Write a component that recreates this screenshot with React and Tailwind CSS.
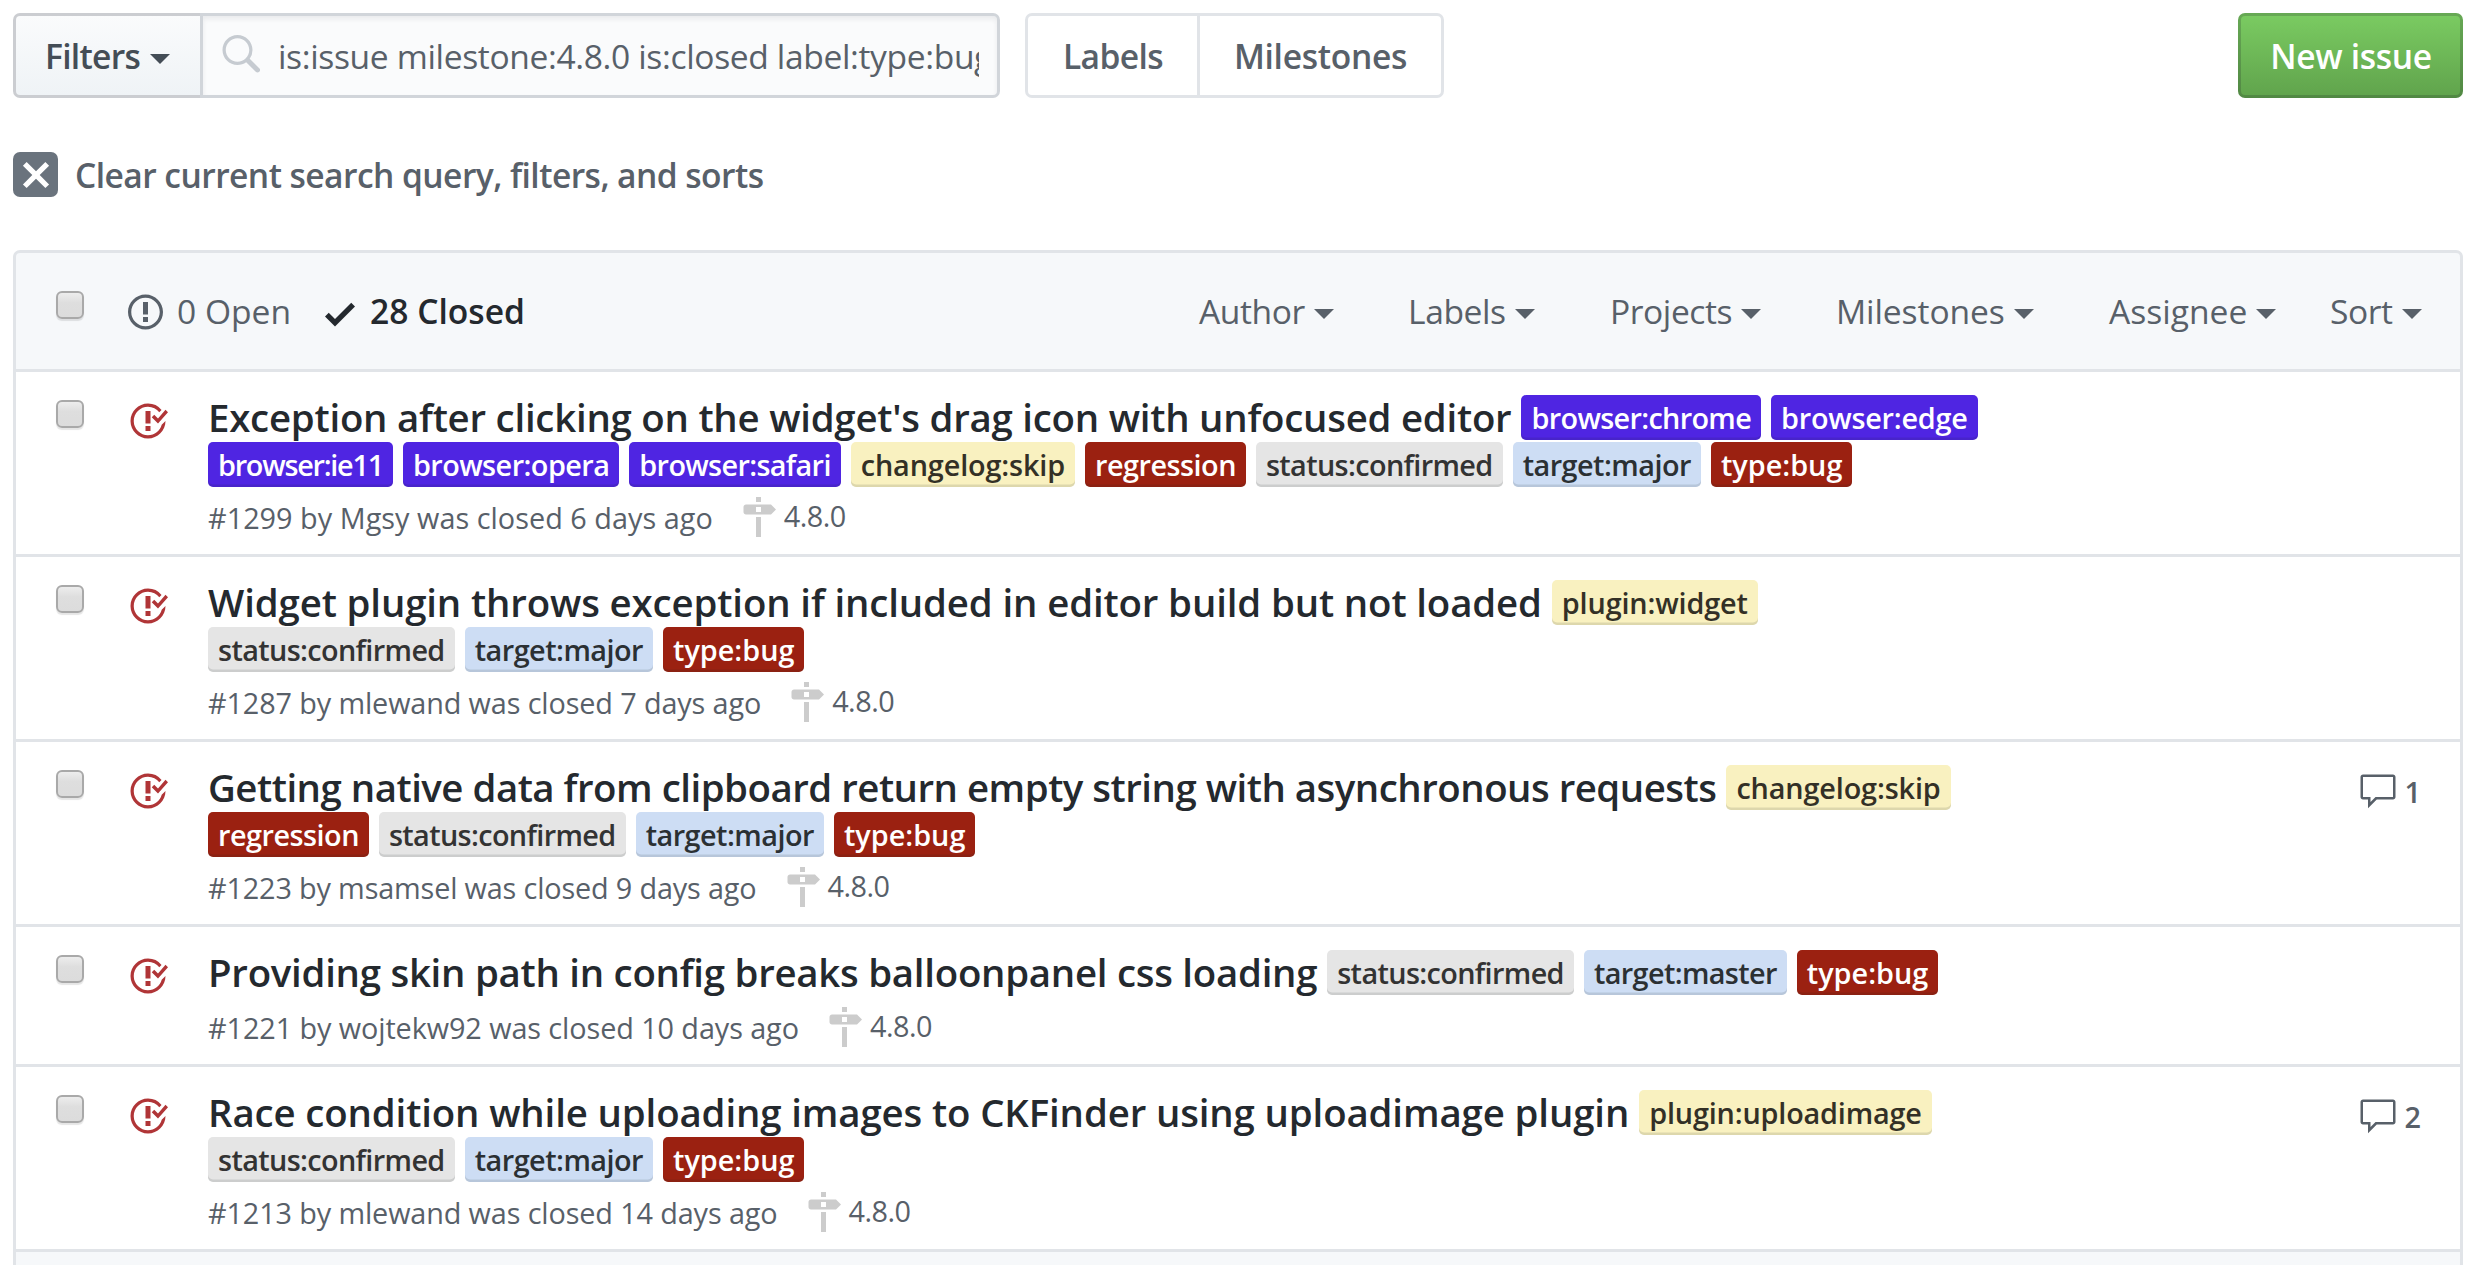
import React from 'react';

const icons = {
  search: {
    w: 16,
    d: 'M15.7 13.3l-3.81-3.83A5.93 5.93 0 0 0 13 6c0-3.31-2.69-6-6-6S1 2.69 1 6s2.69 6 6 6c1.3 0 2.48-.41 3.47-1.11l3.83 3.81c.19.2.45.3.7.3.25 0 .52-.09.7-.3a.996.996 0 0 0 0-1.41v.01zM7 10.7c-2.59 0-4.7-2.11-4.7-4.7 0-2.59 2.11-4.7 4.7-4.7 2.59 0 4.7 2.11 4.7 4.7 0 2.59-2.11 4.7-4.7 4.7z',
  },
  x: {
    w: 12,
    d: 'M7.48 8l3.75 3.75-1.48 1.48L6 9.48l-3.75 3.75-1.48-1.48L4.52 8 .77 4.25l1.48-1.48L6 6.52l3.75-3.75 1.48 1.48L7.48 8z',
  },
  opened: {
    w: 14,
    d: 'M7 2.3c3.14 0 5.7 2.56 5.7 5.7s-2.56 5.7-5.7 5.7A5.71 5.71 0 0 1 1.3 8c0-3.14 2.56-5.7 5.7-5.7zM7 1C3.14 1 0 4.14 0 8s3.14 7 7 7 7-3.14 7-7-3.14-7-7-7zm1 3H6v5h2V4zm0 6H6v2h2v-2z',
  },
  check: { w: 12, d: 'M12 5l-8 8-4-4 1.5-1.5L4 10l6.5-6.5L12 5z' },
  closed: {
    w: 16,
    d: 'M7 10h2v2H7v-2zm2-6H7v5h2V4zm1.5 1.5l-1 1L12 9l4-4.5-1-1L12 7l-1.5-1.5zM8 13.7A5.71 5.71 0 0 1 2.3 8c0-3.14 2.56-5.7 5.7-5.7 1.83 0 3.45.88 4.5 2.2l.92-.92A6.947 6.947 0 0 0 8 1C4.14 1 1 4.14 1 8s3.14 7 7 7 7-3.14 7-7l-1.52 1.52c-.66 2.41-2.86 4.19-5.48 4.19v-.01z',
  },
  milestone: {
    w: 14,
    d: 'M8 2H6V0h2v2zm4 5H2c-.55 0-1-.45-1-1V4c0-.55.45-1 1-1h10l2 2-2 2zM8 4H6v2h2V4zM6 16h2V8H6v8z',
  },
  comment: {
    w: 16,
    d: 'M14 1H2c-.55 0-1 .45-1 1v8c0 .55.45 1 1 1h2v3.5L7.5 11H14c.55 0 1-.45 1-1V2c0-.55-.45-1-1-1zm0 9H7l-2 2v-2H2V2h12v8z',
  },
};

function Icon({ name, className = '' }) {
  const { w, d } = icons[name];
  return (
    <svg
      viewBox={`0 0 ${w} 16`}
      width={w * 2.5}
      height={40}
      fill="currentColor"
      fillRule="evenodd"
      aria-hidden="true"
      className={`shrink-0 ${className}`}
    >
      <path d={d} />
    </svg>
  );
}

function Caret({ className = '' }) {
  return (
    <span
      className={`h-0 w-0 shrink-0 border-x-[10px] border-t-[10px] border-x-transparent border-t-current ${className}`}
    />
  );
}

function Checkbox() {
  return (
    <span className="block h-[28px] w-[28px] shrink-0 rounded-[6px] border-[2.5px] border-[#a9a9a9] bg-linear-to-b from-[#ededed] via-[#dedede] via-40% to-[#dcdcdc] shadow-[0_2px_1px_rgba(0,0,0,0.1)]" />
  );
}

const labelStyles = {
  'browser:chrome': 'bg-[#4f25e2] text-white tracking-[-0.67px]',
  'browser:edge': 'bg-[#4f25e2] text-white tracking-[-0.25px]',
  'browser:ie11': 'bg-[#4f25e2] text-white tracking-[-1.25px]',
  'browser:opera': 'bg-[#4f25e2] text-white tracking-[-0.55px]',
  'browser:safari': 'bg-[#4f25e2] text-white tracking-[-0.66px]',
  'changelog:skip': 'bg-[#f9f1c0] text-[#333026] tracking-[-0.13px]',
  'plugin:widget': 'bg-[#f9f1c0] text-[#333026] tracking-[-0.15px]',
  'plugin:uploadimage': 'bg-[#f9f1c0] text-[#333026] tracking-[-0.17px]',
  regression: 'bg-[#9b2111] text-white tracking-[-0.5px]',
  'type:bug': 'bg-[#9b2111] text-white tracking-[0px]',
  'status:confirmed': 'bg-[#e5e5e5] text-[#333333] tracking-[-0.63px]',
  'target:major': 'bg-[#cdddf4] text-[#2b3033] tracking-[-0.52px]',
  'target:master': 'bg-[#cdddf4] text-[#2b3033] tracking-[-0.62px]',
};

const issues = [
  {
    title: "Exception after clicking on the widget's drag icon with unfocused editor",
    tracking: 'tracking-[-0.235px]',
    labels: [
      'browser:chrome', 'browser:edge', 'browser:ie11', 'browser:opera', 'browser:safari',
      'changelog:skip', 'regression', 'status:confirmed', 'target:major', 'type:bug',
    ],
    meta: '#1299 by Mgsy was closed 6 days ago',
    metaTracking: 'tracking-[0.03px]',
  },
  {
    title: 'Widget plugin throws exception if included in editor build but not loaded',
    tracking: 'tracking-[-0.13px]',
    labels: ['plugin:widget', 'status:confirmed', 'target:major', 'type:bug'],
    meta: '#1287 by mlewand was closed 7 days ago',
    metaTracking: 'tracking-[-0.12px]',
  },
  {
    title: 'Getting native data from clipboard return empty string with asynchronous requests',
    tracking: 'tracking-[-0.49px]',
    labels: ['changelog:skip', 'regression', 'status:confirmed', 'target:major', 'type:bug'],
    meta: '#1223 by msamsel was closed 9 days ago',
    metaTracking: 'tracking-[-0.15px]',
    comments: 1,
  },
  {
    title: 'Providing skin path in config breaks balloonpanel css loading',
    tracking: 'tracking-[-0.26px]',
    labels: ['status:confirmed', 'target:master', 'type:bug'],
    meta: '#1221 by wojtekw92 was closed 10 days ago',
    metaTracking: 'tracking-[-0.08px]',
  },
  {
    title: 'Race condition while uploading images to CKFinder using uploadimage plugin',
    tracking: 'tracking-[-0.13px]',
    labels: ['plugin:uploadimage', 'status:confirmed', 'target:major', 'type:bug'],
    meta: '#1213 by mlewand was closed 14 days ago',
    metaTracking: 'tracking-[-0.12px]',
    comments: 2,
  },
];

function Label({ name }) {
  return (
    <span
      className={`h-[45px] rounded-[5px] px-[10px] text-[28.8px] leading-[45px] font-semibold whitespace-nowrap shadow-[inset_0_-2.5px_0_rgba(27,31,35,0.12)] ${labelStyles[name]}`}
    >
      {name}
    </span>
  );
}

function IssueRow({ issue }) {
  return (
    <li className="flex items-start border-b-[3px] border-[#e1e4e8] pb-[18px] pl-10">
      <div className="mt-7">
        <Checkbox />
      </div>
      <Icon name="closed" className="mt-[29px] ml-[44px] text-[#b03537]" />
      <div className="mt-[23px] ml-10 w-[1790px]">
        <div className="flex min-h-[47px] flex-wrap content-start items-center gap-x-[10px] gap-y-[2px]">
          <a className={`text-[38.4px] leading-[45px] font-semibold whitespace-nowrap text-[#24292e] ${issue.tracking}`}>
            {issue.title}
          </a>
          {issue.labels.map((name) => (
            <Label key={name} name={name} />
          ))}
        </div>
        <div className="mt-[13px] flex h-9 items-center text-[28.8px] leading-9 whitespace-nowrap text-[#586069]">
          <span className={issue.metaTracking}>{issue.meta}</span>
          <Icon name="milestone" className="-mt-[3px] ml-7 text-[#cccccc]" />
          <span className="-mt-[5px] ml-2 tracking-[-0.5px]">4.8.0</span>
        </div>
      </div>
      {issue.comments && (
        <div className="mt-[30px] mr-[39px] ml-auto flex items-center text-[28.8px] leading-10 font-semibold text-[#586069]">
          <Icon name="comment" />
          <span className="ml-[7px]">{issue.comments}</span>
        </div>
      )}
    </li>
  );
}

const menus = [
  ['Author', 'tracking-[-0.4px]'],
  ['Labels', 'tracking-[-0.4px]'],
  ['Projects', 'tracking-[-0.43px]'],
  ['Milestones', 'tracking-[-0.1px]'],
  ['Assignee', 'tracking-[0px]'],
  ['Sort', 'tracking-[-0.45px]'],
];

export default function App() {
  return (
    <main className="h-[1265px] w-[2475px] overflow-hidden bg-white px-[13px] pt-[13px] pr-3 font-['Open_Sans','Noto_Sans',sans-serif] text-[33.6px] text-[#586069]">
      <div className="flex h-[85px] items-stretch">
        <button className="flex w-[187px] items-center rounded-l-[7px] border-[3px] border-r-0 border-[#cbcdd1] bg-linear-to-b from-[#fafbfc] to-[#eff3f6] pt-px pl-[29px] font-semibold tracking-[-0.7px] text-[#444d56]">
          Filters
          <Caret className="mt-[5px] ml-[10px]" />
        </button>
        <div className="flex w-[800px] items-center rounded-r-[7px] border-[3px] border-[#d1d5da] bg-[#fafbfc] pr-[18px] pl-[17px] shadow-[inset_0_3px_5px_rgba(27,31,35,0.075)]">
          <Icon name="search" className="-mt-px text-[#c6cbd1]" />
          <div className="ml-[18px] flex-1 overflow-hidden pt-px tracking-[-0.36px] whitespace-nowrap">
            is:issue milestone:4.8.0 is:closed label:type:bug
          </div>
        </div>
        <div className="ml-[25px] flex w-[419px] rounded-[7px] border-[3px] border-[#e1e4e8] font-semibold">
          <a className="flex w-[172px] items-center justify-center border-r-[3px] border-[#e1e4e8] pt-px pl-px tracking-[-0.6px]">Labels</a>
          <a className="flex flex-1 items-center justify-center pt-px tracking-[-0.3px]">Milestones</a>
        </div>
        <button className="ml-auto w-[225px] rounded-[7px] border-[3px] border-[#1b1f23]/20 bg-linear-to-b from-[#7bcc62] to-[#60a34c] bg-origin-border pt-px pl-px font-semibold tracking-[-0.35px] text-white">
          New issue
        </button>
      </div>

      <a className="mt-[54px] flex h-[45px] items-center font-semibold tracking-[-0.56px]">
        <span className="flex h-[45px] w-[45px] items-center justify-center rounded-[7px] bg-[#6a737d] text-white">
          <Icon name="x" />
        </span>
        <span className="ml-[17px] pt-px">Clear current search query, filters, and sorts</span>
      </a>

      <section className="mt-[53px] h-[1100px] rounded-t-[7px] border-[3px] border-[#e1e4e8] bg-[#f6f8fa]">
        <header className="flex h-[119px] items-center border-b-[3px] border-[#e1e4e8] pl-10">
          <div className="-mt-[12px]">
            <Checkbox />
          </div>
          <Icon name="opened" className="mt-px ml-[44px]" />
          <span className="ml-[14px] pt-px">0 Open</span>
          <Icon name="check" className="mt-[5px] ml-[34px] text-[#24292e]" />
          <span className="ml-[15px] pt-px font-semibold text-[#24292e]">28 Closed</span>
          <nav className="mr-[36px] ml-auto grid grid-cols-[209px_202px_226px_273px_221px_94px] pt-px">
            {menus.map(([name, tracking]) => (
              <a key={name} className={`flex items-center gap-[9px] ${tracking}`}>
                {name}
                <Caret className="mt-[6px]" />
              </a>
            ))}
          </nav>
        </header>
        <ul className="bg-white">
          {issues.map((issue) => (
            <IssueRow key={issue.meta} issue={issue} />
          ))}
        </ul>
      </section>
    </main>
  );
}
